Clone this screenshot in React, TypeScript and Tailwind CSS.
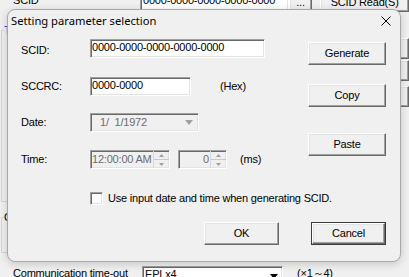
import React from "react";

const raised =
  "border border-t-white border-l-white border-r-[#696969] border-b-[#696969] shadow-[inset_-1px_-1px_0_#a0a0a0,inset_1px_1px_0_#e3e3e3] bg-[#f0f0f0]";
const sunken =
  "border border-t-[#a0a0a0] border-l-[#a0a0a0] border-r-white border-b-white shadow-[inset_1px_1px_0_#696969,inset_-1px_-1px_0_#e3e3e3]";

function Spinner() {
  return (
    <div className="flex flex-col w-[16px] h-full border-l border-[#d8d8d8]">
      <div className="flex-1 flex items-center justify-center border-b border-[#c8c8c8]">
        <svg width="5" height="3" viewBox="0 0 5 3">
          <path d="M0 3 L2.5 0 L5 3 Z" fill="#a0a0a0" />
        </svg>
      </div>
      <div className="flex-1 flex items-center justify-center">
        <svg width="5" height="3" viewBox="0 0 5 3">
          <path d="M0 0 L2.5 3 L5 0 Z" fill="#a0a0a0" />
        </svg>
      </div>
    </div>
  );
}

export default function App() {
  return (
    <div className="relative w-[409px] h-[277px] overflow-hidden bg-[#f0f0f0] font-['Liberation_Sans',Arial,sans-serif] text-[11px] leading-[13px] tracking-[-0.2px] text-black whitespace-nowrap">
      {/* background window */}
      <div className="flex flex-col">
        <div className="flex items-start h-[20px] -mt-[8px]">
          <span className="ml-[13px] w-[129px] mt-[2px]">SCID</span>
          <div className={`w-[151px] h-[20px] bg-white ${sunken} pl-[2px] pt-[1px]`}>
            0000-0000-0000-0000-0000
          </div>
          <div className={`w-[24px] h-[20px] ${raised} flex items-center justify-center`}>...</div>
          <div className={`ml-[8px] w-[90px] h-[20px] ${raised} flex items-center justify-center`}>
            SCID Read(S)
          </div>
        </div>
        <div className="flex">
          <div className="flex flex-col w-[330px] ml-px mt-[18px]">
            <div className="relative h-[172px] border-l border-t border-b border-[#d5d5d5]">
              <span className="absolute -top-[7px] left-[2px] bg-[#f0f0f0] pr-px text-[#0046d5]">T</span>
            </div>
            <div className="relative mt-[15px] h-[36px] border-l border-t border-b border-[#d5d5d5]">
              <span className="absolute -top-[7px] left-[2px] bg-[#f0f0f0] pr-px">C</span>
            </div>
          </div>
          <div className="flex flex-col ml-[5px] mt-[26px] gap-[1px]">
            <div className={`w-[80px] h-[21px] ${raised} flex items-center justify-end pr-[8px]`}>(0)</div>
            <div className={`w-[80px] h-[21px] ${raised} flex items-center justify-end pr-[8px]`}>(1)</div>
            <div className={`mt-[4px] w-[80px] h-[21px] ${raised} flex items-center justify-end pr-[8px]`}>(2)</div>
          </div>
        </div>
        <div className="flex items-start mt-[11px]">
          <span className="ml-[13px] w-[129px] mt-[3px]">Communication time-out</span>
          <div className={`mt-[2px] w-[141px] h-[20px] bg-white ${sunken} flex items-start pt-[1px] pl-[2px] justify-between`}>
            <span>EPLx4</span>
            <svg width="8" height="5" viewBox="0 0 8 5" className="mr-[4px] mt-[6px]">
              <path d="M0 0 L8 0 L4 5 Z" fill="#000" />
            </svg>
          </div>
          <span className="ml-[14px] mt-[3px]">(×1～4)</span>
        </div>
      </div>

      {/* dialog */}
      <div className="absolute left-[7px] top-[9px] w-[394px] h-[253px] rounded-[8px] border border-[#a8a8a8] bg-[#f0f0f0] shadow-[0_2px_8px_rgba(0,0,0,0.18)] flex flex-col">
        <div className="h-[22px] flex items-center justify-between pl-[3px] pr-[9px]">
          <span className="font-['Noto_Sans',sans-serif] text-[11.2px] leading-[16px] tracking-normal">Setting parameter selection</span>
          <svg width="10" height="10" viewBox="0 0 10 10">
            <path d="M0.5 0.5 L9.5 9.5 M9.5 0.5 L0.5 9.5" stroke="#000" strokeWidth="1" />
          </svg>
        </div>
        <div className="flex">
          <div className="flex flex-col w-[300px]">
            <div className="flex items-center h-[19px] mt-[7px]">
              <span className="ml-[13px] w-[69px] mt-[3px]">SCID:</span>
              <div className={`w-[175px] h-[19px] bg-white ${sunken} pl-[1px] pt-[1px]`}>0000-0000-0000-0000-0000</div>
            </div>
            <div className="flex items-center h-[19px] mt-[19px]">
              <span className="ml-[13px] w-[69px]">SCCRC:</span>
              <div className={`w-[101px] h-[19px] bg-white ${sunken} pl-[1px] pt-[1px]`}>0000-0000</div>
              <span className="ml-[29px]">(Hex)</span>
            </div>
            <div className="flex items-center h-[19px] mt-[17px]">
              <span className="ml-[13px] w-[69px]">Date:</span>
              <div className={`w-[109px] h-[19px] ${sunken} flex items-center justify-between pl-[9px] text-[#6d6d6d]`}>
                <span>1/&nbsp;&nbsp;1/1972</span>
                <svg width="8" height="5" viewBox="0 0 8 5" className="mr-[5px]">
                  <path d="M0 0 L8 0 L4 5 Z" fill="#a0a0a0" />
                </svg>
              </div>
            </div>
            <div className="flex items-center h-[19px] mt-[18px]">
              <span className="ml-[13px] w-[69px]">Time:</span>
              <div className={`w-[80px] h-[19px] ${sunken} flex items-center text-[#6d6d6d]`}>
                <span className="flex-1 pl-[1px]">12:00:00 AM</span>
                <Spinner />
              </div>
              <div className={`ml-[8px] w-[49px] h-[19px] ${sunken} flex items-center text-[#6d6d6d]`}>
                <span className="flex-1 text-right pr-[1px]">0</span>
                <Spinner />
              </div>
              <span className="ml-[13px]">(ms)</span>
            </div>
          </div>
          <div className="flex flex-col">
            <div className={`mt-[10px] w-[78px] h-[23px] ${raised} flex items-center justify-center`}>Generate</div>
            <div className={`mt-[19px] w-[78px] h-[23px] ${raised} flex items-center justify-center`}>Copy</div>
            <div className={`mt-[26px] w-[78px] h-[23px] ${raised} flex items-center justify-center`}>Paste</div>
          </div>
        </div>
        <div className="flex items-center mt-[23px] ml-[82px] h-[13px]">
          <div className={`w-[13px] h-[13px] bg-white ${sunken}`} />
          <span className="ml-[5px]">Use input date and time when generating SCID.</span>
        </div>
        <div className="flex mt-[17px] ml-[196px]">
          <div className={`w-[75px] h-[23px] ${raised} flex items-center justify-center`}>OK</div>
          <div className="ml-[32px] w-[75px] h-[23px] border border-[#3c3c3c] flex">
            <div className={`flex-1 ${raised} flex items-center justify-center`}>Cancel</div>
          </div>
        </div>
      </div>
    </div>
  );
}
